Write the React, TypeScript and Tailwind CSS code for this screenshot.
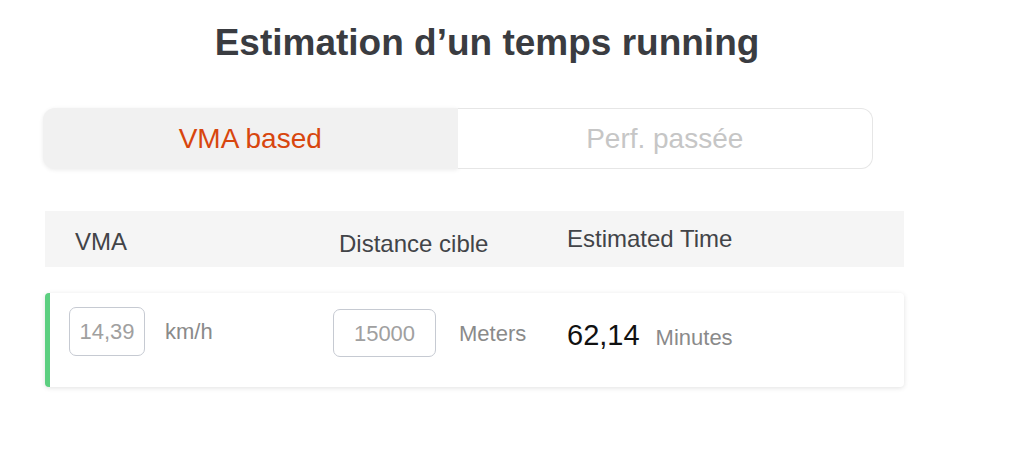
import React from "react";

const font = { fontFamily: '"Liberation Sans", Arial, sans-serif' };

export default function App() {
	return (
		<div className="w-[1024px] h-[453px] bg-white overflow-hidden" style={font}>
			<div className="w-[884px] ml-[45px] pt-[24px]">
				<h1 className="text-center text-[37px] leading-none font-bold text-[#3a3c41]">
					Estimation d’un temps running
				</h1>
			</div>

			<div className="flex w-[830px] h-[61px] ml-[43px] mt-[47px]">
				<div className="flex-1 flex items-center justify-center bg-[#f1f1f1] rounded-l-[12px] shadow-[0_1px_4px_rgba(0,0,0,0.08)] text-[28px] text-[#d8460e]">
					VMA based
				</div>
				<div className="flex-1 flex items-center justify-center bg-white border border-l-0 border-[#e6e6e6] rounded-r-[12px] text-[28px] text-[#c6c6c6]">
					Perf. passée
				</div>
			</div>

			<div className="grid grid-cols-[264px_228px_1fr] w-[859px] h-[56px] ml-[45px] mt-[42px] bg-[#f5f5f5] text-[24px] leading-none text-[#424448]">
				<div className="pl-[30px] pt-[19px]">VMA</div>
				<div className="pl-[30px] pt-[21px]">Distance cible</div>
				<div className="pl-[30px] pt-[16px]">Estimated Time</div>
			</div>

			<div className="grid grid-cols-[260px_228px_1fr] w-[859px] h-[94px] ml-[45px] mt-[26px] bg-white rounded-[4px] border-l-[5px] border-[#5ccf80] shadow-[0_1px_5px_rgba(0,0,0,0.12)]">
				<div className="flex items-center gap-[20px] pl-[19px] mt-[14px] h-[49px]">
					<div className="w-[76px] h-[49px] flex items-center justify-center border border-[#c6cad2] rounded-[7px] text-[22px] text-[#a0a0a0]">
						14,39
					</div>
					<span className="text-[22px] text-[#8a8a8a]">km/h</span>
				</div>
				<div className="flex items-center gap-[23px] pl-[23px] mt-[16px] h-[48px]">
					<div className="w-[103px] h-[48px] flex items-center justify-center border border-[#c6cad2] rounded-[7px] text-[22px] text-[#a0a0a0]">
						15000
					</div>
					<span className="text-[22px] text-[#8a8a8a]">Meters</span>
				</div>
				<div className="flex items-center gap-[16px] pl-[29px] mt-[19px] h-[48px]">
					<span className="text-[29px] text-[#111]">62,14</span>
					<span className="text-[22px] text-[#8a8a8a] pt-[2px]">Minutes</span>
				</div>
			</div>
		</div>
	);
}
